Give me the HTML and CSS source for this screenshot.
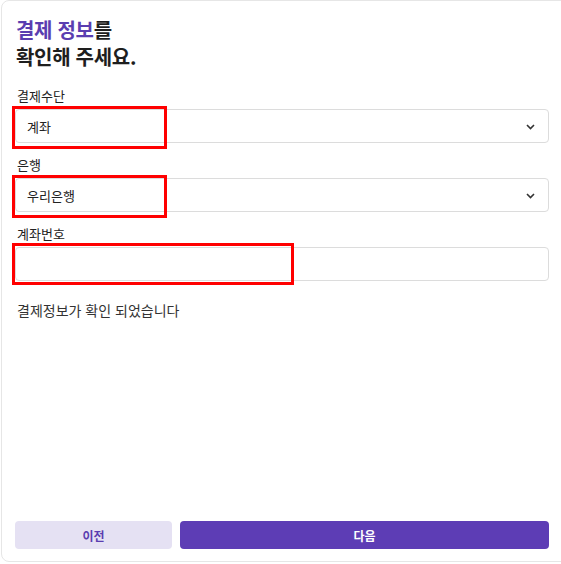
FILE: index.html
```html
<!DOCTYPE html>
<html lang="ko">

<head>
    <meta charset="UTF-8">
    <meta name="viewport" content="width=device-width, initial-scale=1.0">
    <title>결제 정보 확인</title>
    <link rel="stylesheet" href="styles.css">
</head>

<body>
    <div class="card">
        <h2 class="title"><span class="accent">결제 정보</span>를<br>확인해 주세요.</h2>

        <!-- 결제수단 -->
        <div class="field first">
            <label class="label">결제수단</label>
            <div class="control">
                <div class="select">
                    <span>계좌</span>
                    <svg class="chevron" width="9" height="6" viewBox="0 0 9 6"><path d="M1 1 L4.5 4.5 L8 1" fill="none" stroke="#333" stroke-width="1.6"/></svg>
                </div>
                <div class="mark mark-short"></div>
            </div>
        </div>

        <!-- 은행 -->
        <div class="field">
            <label class="label">은행</label>
            <div class="control">
                <div class="select">
                    <span>우리은행</span>
                    <svg class="chevron" width="9" height="6" viewBox="0 0 9 6"><path d="M1 1 L4.5 4.5 L8 1" fill="none" stroke="#333" stroke-width="1.6"/></svg>
                </div>
                <div class="mark mark-short"></div>
            </div>
        </div>

        <!-- 계좌번호 -->
        <div class="field">
            <label class="label">계좌번호</label>
            <div class="control">
                <input class="input" type="text">
                <div class="mark mark-long"></div>
            </div>
        </div>

        <p class="message">결제정보가 확인 되었습니다</p>

        <div class="actions">
            <button class="btn btn-prev">이전</button>
            <button class="btn btn-next">다음</button>
        </div>
    </div>
</body>

</html>
```

FILE: styles.css
```css
* {
    margin: 0;
    padding: 0;
    box-sizing: border-box;
}

html, body {
    height: 100%;
    overflow: hidden;
    background: #fff;
    font-family: "Noto Sans CJK KR", "Noto Sans", sans-serif;
    color: #222;
}

.card {
    margin-left: 1px;
    width: 570px;
    height: 562px;
    border: 1px solid #e6e6e6;
    border-radius: 8px;
    padding: 15px 21px 12px 13px;
    display: flex;
    flex-direction: column;
}

.title {
    font-size: 20px;
    line-height: 27px;
    font-weight: 700;
    color: #1e1e1e;
    padding-left: 1px;
    letter-spacing: -0.3px;
}

.title .accent {
    color: #5a3db0;
}

.field {
    margin-top: 13px;
}

.field.first {
    margin-top: 17px;
}

.label {
    display: block;
    font-size: 13px;
    line-height: 18px;
    color: #222;
    padding-left: 2px;
    margin-bottom: 4px;
}

.control {
    position: relative;
}

.select,
.input {
    width: 100%;
    height: 34px;
    border: 1px solid #dcdcdc;
    border-radius: 4px;
    background: #fff;
}

.select {
    display: flex;
    align-items: center;
    justify-content: space-between;
    padding: 0 13px 0 11px;
    font-size: 13px;
    color: #222;
}

.chevron {
    margin-top: 1px;
}

.input {
    display: block;
    font-family: inherit;
    outline: none;
}

/* 빨간 표시 박스 */
.mark {
    position: absolute;
    top: -3px;
    left: -3px;
    height: 43px;
    border: 3px solid #f00;
}

.mark-short {
    width: 155px;
}

.mark-long {
    top: -4px;
    width: 282px;
    height: 42px;
}

.message {
    margin-top: 19px;
    font-size: 14px;
    line-height: 20px;
    color: #333;
    padding-left: 2px;
}

.actions {
    margin-top: auto;
    display: flex;
    gap: 8px;
}

.btn {
    height: 28px;
    border: none;
    border-radius: 4px;
    font-family: inherit;
    font-size: 12px;
    font-weight: 700;
    cursor: pointer;
}

.btn-prev {
    width: 157px;
    background: #e5e1f3;
    color: #5a3db0;
}

.btn-next {
    flex: 1;
    background: #5d3db5;
    color: #fff;
}
```
